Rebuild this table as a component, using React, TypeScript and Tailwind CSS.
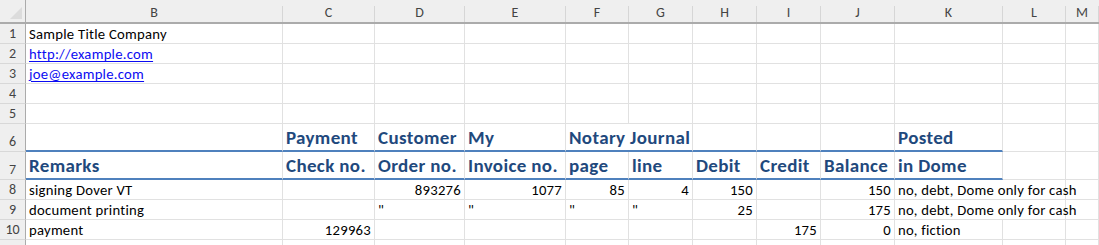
import React from "react";

type Cell = {
  text?: string;
  align?: "left" | "right";
  span?: number;
  link?: boolean;
  head?: boolean;
  rule?: boolean;
};

const cols = ["B", "C", "D", "E", "F", "G", "H", "I", "J", "K", "L", "M"];

const blank = (n: number, rule = false): Cell[] =>
  Array.from({ length: n }, () => ({ rule }));

// the two heading rows carry the thick blue rule from B to K
const headRow = (cells: Cell[]): Cell[] => [
  ...cells.map((c) => ({ ...c, head: true, rule: true })),
  ...blank(2),
];

const rows: { n: number | null; h: string; cells: Cell[] }[] = [
  { n: 1, h: "h-[20px]", cells: [{ text: "Sample Title Company" }, ...blank(11)] },
  { n: 2, h: "h-[20px]", cells: [{ text: "http://example.com", link: true }, ...blank(11)] },
  { n: 3, h: "h-[20px]", cells: [{ text: "joe@example.com", link: true }, ...blank(11)] },
  { n: 4, h: "h-[20px]", cells: blank(12) },
  { n: 5, h: "h-[20px]", cells: blank(12) },
  {
    n: 6,
    h: "h-[28px]",
    cells: headRow([
      {},
      { text: "Payment" },
      { text: "Customer" },
      { text: "My" },
      { text: "Notary Journal", span: 2 },
      {},
      {},
      {},
      { text: "Posted" },
    ]),
  },
  {
    n: 7,
    h: "h-[28px]",
    cells: headRow([
      { text: "Remarks" },
      { text: "Check no." },
      { text: "Order no." },
      { text: "Invoice no." },
      { text: "page" },
      { text: "line" },
      { text: "Debit" },
      { text: "Credit" },
      { text: "Balance" },
      { text: "in Dome" },
    ]),
  },
  {
    n: 8,
    h: "h-[20px]",
    cells: [
      { text: "signing Dover VT" },
      {},
      { text: "893276", align: "right" },
      { text: "1077", align: "right" },
      { text: "85", align: "right" },
      { text: "4", align: "right" },
      { text: "150", align: "right" },
      {},
      { text: "150", align: "right" },
      { text: "no, debt, Dome only for cash", span: 2 },
      {},
    ],
  },
  {
    n: 9,
    h: "h-[20px]",
    cells: [
      { text: "document printing" },
      {},
      { text: '"' },
      { text: '"' },
      { text: '"' },
      { text: '"' },
      { text: "25", align: "right" },
      {},
      { text: "175", align: "right" },
      { text: "no, debt, Dome only for cash", span: 2 },
      {},
    ],
  },
  {
    n: 10,
    h: "h-[20px]",
    cells: [
      { text: "payment" },
      { text: "129963", align: "right" },
      {},
      {},
      {},
      {},
      {},
      { text: "175", align: "right" },
      { text: "0", align: "right" },
      { text: "no, fiction" },
      {},
      {},
    ],
  },
  // row 11 only peeks in at the bottom edge
  { n: null, h: "h-[20px]", cells: blank(12) },
];

const font = { fontFamily: "Carlito, Calibri, Lato, 'Liberation Sans', sans-serif" };

const SheetCell = ({ cell }: { cell: Cell }) => {
  const span = cell.span === 2 ? "col-span-2" : "";
  const border = cell.rule
    ? "border-b-2 border-b-[#4F81BD]"
    : "border-b border-b-[#E1E1E1]";
  const justify = cell.align === "right" ? "justify-end" : "justify-start";
  let txt = "text-[14.7px] leading-[18px] tracking-[0.25px] text-black";
  if (cell.head) txt = "text-[19px] leading-[22px] tracking-[0.35px] font-bold text-[#1F497D] pb-[1px]";
  if (cell.link)
    txt = "text-[14.7px] leading-[18px] tracking-[0.25px] text-[#0B0BF2] underline underline-offset-2";
  return (
    <div
      className={`${span} ${border} ${justify} flex items-end border-r border-r-[#E1E1E1] px-[3px] overflow-visible whitespace-nowrap`}
    >
      {cell.text && <span className={txt}>{cell.text}</span>}
    </div>
  );
};

export default function App() {
  return (
    <div className="w-[1099px] h-[245px] overflow-hidden bg-white" style={font}>
      <div className="grid grid-cols-[26px_257px_92px_90px_101px_63px_64px_64px_64px_74px_108px_63px_33px]">
        {/* column letters */}
        <div className="h-[24px] bg-[#EFEFEF] border-b-2 border-b-[#ABABAB] border-r border-r-[#ABABAB] relative">
          <svg className="absolute right-[3px] bottom-[3px]" width="12" height="12" viewBox="0 0 12 12">
            <path d="M12 0 L12 12 L0 12 Z" fill="#DCDCDC" />
          </svg>
        </div>
        {cols.map((c) => (
          <div
            key={c}
            className="h-[24px] bg-[#EFEFEF] border-b-2 border-b-[#ABABAB] flex items-stretch"
          >
            <span className="flex-1 flex items-center justify-center text-[14px] text-[#444] pt-[2px]">
              {c}
            </span>
            <span className="w-px mt-[6px] bg-[#D6D6D6]" />
          </div>
        ))}

        {rows.map((r, idx) => (
          <React.Fragment key={idx}>
            <div
              className={`${r.h} bg-[#EFEFEF] border-r border-r-[#ABABAB] border-b border-b-[#D8D8D8] flex items-end justify-center text-[14px] leading-[18px] text-[#444]`}
            >
              {r.n}
            </div>
            {r.cells.map((c, i) => (
              <SheetCell key={i} cell={c} />
            ))}
          </React.Fragment>
        ))}
      </div>
    </div>
  );
}
